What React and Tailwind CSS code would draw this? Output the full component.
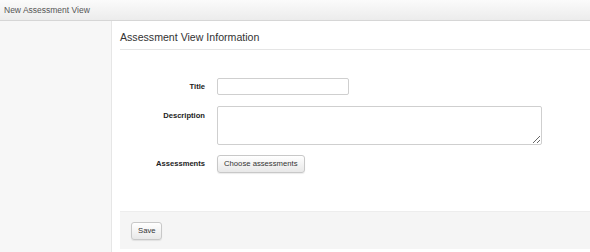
import React from 'react';

const btn =
    'h-[18px] px-[6px] whitespace-nowrap text-[7.7px] text-[#333] border border-[#c8c8c8] rounded-[3px] bg-gradient-to-b from-white to-[#e8e8e8] shadow-[0_1px_1px_rgba(0,0,0,0.08)] leading-none';

const NewAssessmentView = () => {
    return (
        <div className="w-[590px] h-[252px] bg-white overflow-hidden font-['Liberation_Sans',Arial,sans-serif]">
            <div className="h-[21px] flex items-center pl-[4px] bg-gradient-to-b from-[#fbfbfb] to-[#ececec] border-b border-[#d6d6d6]">
                <span className="text-[8.5px] text-[#555]">New Assessment View</span>
            </div>

            <div className="flex h-[231px]">
                <aside className="w-[112px] shrink-0 bg-[#f7f7f7] border-r border-[#e6e6e6]" />

                <main className="flex-1 pl-[8px] flex flex-col">
                    <div className="h-[29px] flex items-end pb-[6px] border-b border-[#e5e5e5]">
                        <h2 className="text-[10.6px] text-[#333] leading-none">Assessment View Information</h2>
                    </div>

                    <div className="pt-[28px] flex flex-col">
                        <div className="flex items-center h-[17px]">
                            <label className="w-[85px] text-right text-[7.6px] font-bold text-[#222]">Title</label>
                            <input className="ml-[12px] w-[132px] h-[17px] border border-[#cfcfcf] rounded-[2px] bg-white outline-none" />
                        </div>

                        <div className="flex items-start mt-[11px]">
                            <label className="w-[85px] text-right text-[7.6px] font-bold text-[#222] pt-[4px]">Description</label>
                            <textarea className="ml-[12px] w-[325px] h-[39px] border border-[#cfcfcf] rounded-[2px] bg-white outline-none" />
                        </div>

                        <div className="flex items-center mt-[10px]">
                            <label className="w-[85px] text-right text-[7.6px] font-bold text-[#222]">Assessments</label>
                            <button className={`ml-[12px] ${btn}`}>Choose assessments</button>
                        </div>
                    </div>

                    <div className="mt-[38px] h-[38px] bg-[#f5f5f5] border-t border-[#ededed] flex items-center pl-[11px]">
                        <button className={`w-[31px] ${btn}`}>Save</button>
                    </div>
                </main>
            </div>
        </div>
    );
};

export default NewAssessmentView;
